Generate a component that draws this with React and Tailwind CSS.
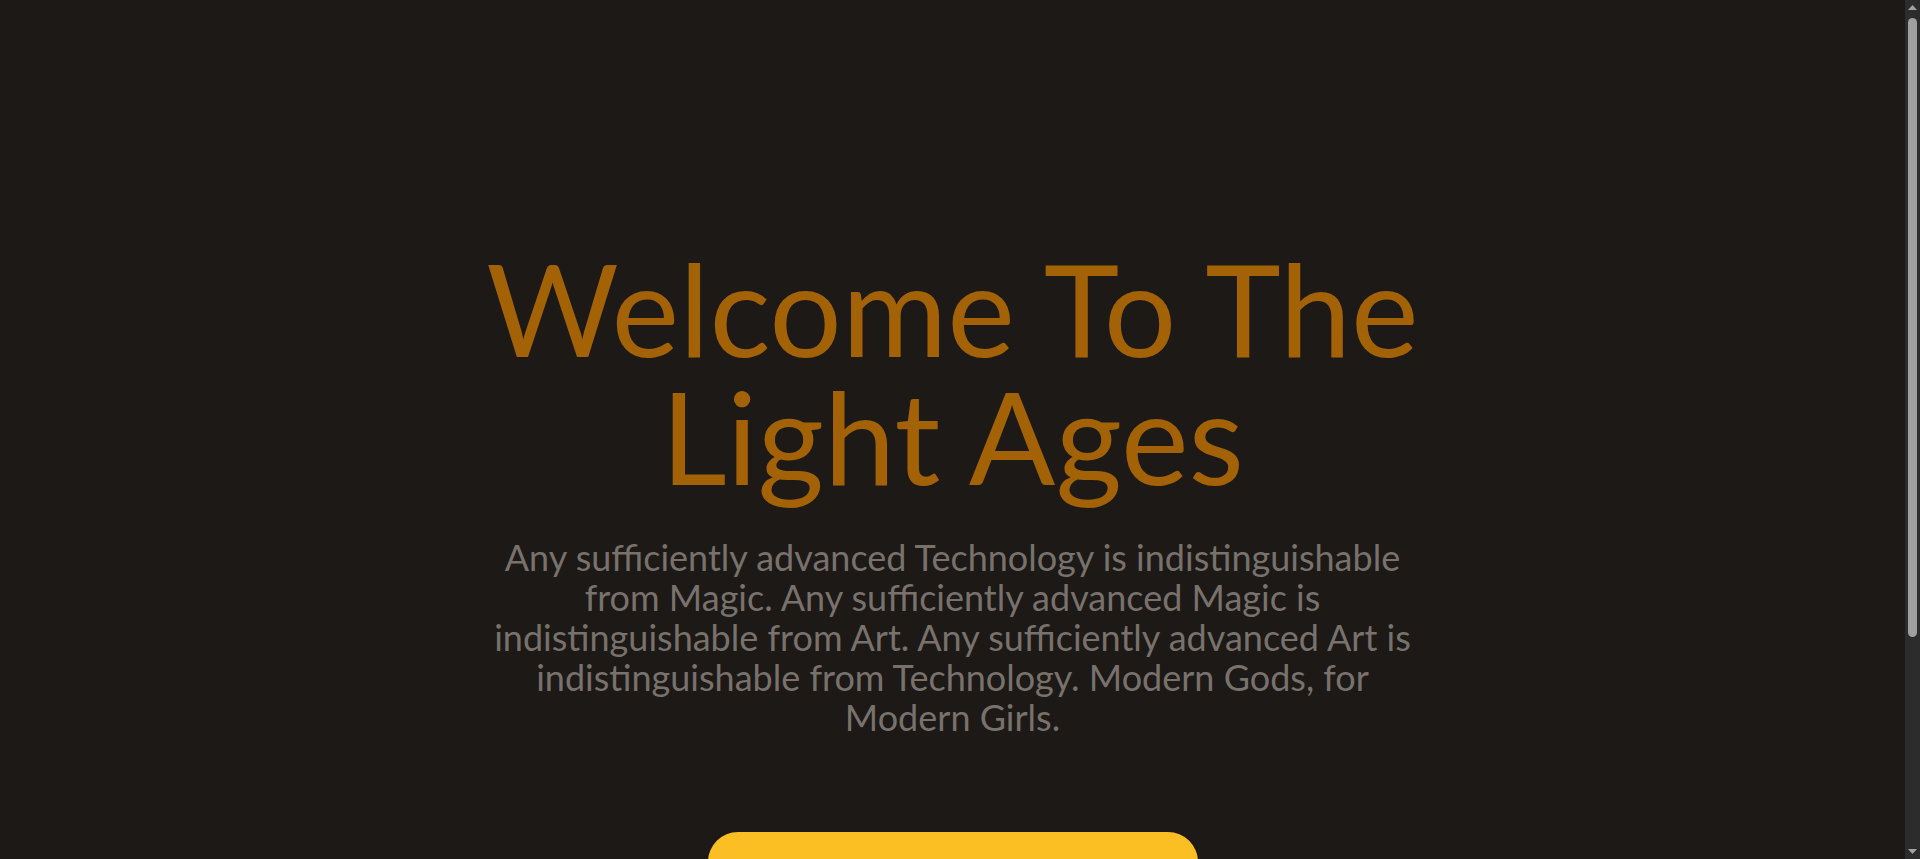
export default function App() {
  return (
    <div className="flex h-screen bg-[#1c1917] font-['Lato',sans-serif]">
      {/* Hero */}
      <main className="min-w-0 flex-1 overflow-hidden">
        <section className="flex flex-col items-center pt-[244px] pb-[222px]">
          <div className="w-1/2 text-center">
            <h1 className="text-[128px] leading-none font-normal text-[#a36205]">
              Welcome To The Light Ages
            </h1>
            <p className="mt-[37px] text-4xl leading-10 text-[#78716c]">
              Any sufficiently advanced Technology is indistinguishable from Magic.
              Any sufficiently advanced Magic is indistinguishable from Art.
              Any sufficiently advanced Art is indistinguishable from Technology.
              Modern Gods, for Modern Girls.
            </p>
          </div>
          <button className="mt-[95px] h-24 w-[490px] rounded-[30px] bg-[#fbbf24] text-2xl font-semibold text-[#1c1917]">
            Enter
          </button>
        </section>
      </main>

      {/* Scrollbar (dark theme) */}
      <aside className="flex w-[15px] shrink-0 flex-col items-center bg-[#2c2c2c]">
        <div className="flex h-[15px] items-center justify-center">
          <svg width="9" height="5" viewBox="0 0 9 5"><path d="M4.5 0L9 5H0z" fill="#a3a3a3" /></svg>
        </div>
        <div className="mt-[3px] h-[619px] w-[9px] rounded-full bg-[#9f9f9f]" />
        <div className="flex-1" />
        <div className="flex h-[15px] items-center justify-center">
          <svg width="9" height="5" viewBox="0 0 9 5"><path d="M0 0H9L4.5 5z" fill="#a3a3a3" /></svg>
        </div>
      </aside>
    </div>
  )
}
